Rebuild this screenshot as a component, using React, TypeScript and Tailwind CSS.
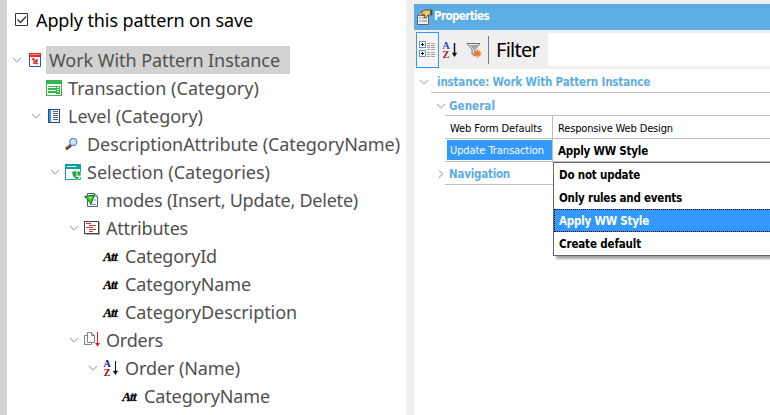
import { useLayoutEffect, useRef, useState, type ReactNode } from "react";

const UI = "font-['Noto_Sans','Open_Sans',sans-serif]";
const TAHOMA = "font-['DejaVu_Sans_Condensed','DejaVu_Sans',sans-serif]";

/* Text whose letter spacing is adjusted so that it occupies a given width. */
function Fit({ w, className = "", children }: { w: number; className?: string; children: string }) {
  const ref = useRef<HTMLSpanElement>(null);
  const [gap, setGap] = useState(0);
  useLayoutEffect(() => {
    if (ref.current) setGap((w - ref.current.getBoundingClientRect().width) / children.length);
  }, []);
  return (
    <span ref={ref} className={`inline-block shrink-0 whitespace-pre ${className}`} style={{ letterSpacing: gap }}>
      {children}
    </span>
  );
}

function Chevron({ right = false }: { right?: boolean }) {
  return (
    <svg width="10" height="10" viewBox="0 0 10 10" fill="none" stroke="#b4bac0" strokeWidth="1.2" className="shrink-0">
      <path d={right ? "M3 1.5 6.5 5 3 8.5" : "M1 3 5 7 9 3"} />
    </svg>
  );
}

function SortIcon({ big = false }: { big?: boolean }) {
  return (
    <svg width="16" height="16" viewBox="0 0 16 16" className="shrink-0 overflow-visible">
      <g fontFamily="Liberation Serif, serif" fontWeight="bold" fontSize={big ? 10.5 : 10} textAnchor="middle">
        <text x="4" y="7.3" fill={big ? "#2851b8" : "#0808b8"}>A</text>
        <text x="4" y="15.6" fill={big ? "#a52430" : "#990808"}>Z</text>
      </g>
      <path d="M12.5 1v13" stroke="#111" strokeWidth={big ? 1.5 : 1} />
      <path d="M9.8 10.8h5.4L12.5 15z" fill="#111" />
    </svg>
  );
}

function AttIcon() {
  return (
    <span className="-ml-px w-4 text-center font-['Liberation_Serif',serif] text-[13px] font-bold italic leading-none tracking-[-0.8px] text-black [-webkit-text-stroke:0.3px_black]">
      Att
    </span>
  );
}

const svg = (children: ReactNode) => (
  <svg width="16" height="16" viewBox="0 0 16 16" className="shrink-0">{children}</svg>
);

const icons: Record<string, ReactNode> = {
  instance: svg(
    <g>
      <path d="M2.5 5v9.5h11V5" fill="#f7f9ff" stroke="#3156a8" />
      <path d="M2 1h12v4H2z" fill="#ed2a24" />
      <path d="M3.5 2.5h9" stroke="#ff9a8b" />
      <path d="M5 7h2v2h3V7M6 11h3V9M9 11.5h2" fill="none" stroke="#d42a22" strokeWidth="1.4" />
    </g>,
  ),
  transaction: svg(
    <g shapeRendering="crispEdges">
      <path d="M0 0h16v16H0z" fill="#36b54a" />
      <path d="M1 4h14v11H1z" fill="#fff" />
      <path d="M2 6h12v8H2z" fill="#36b54a" />
      <path d="M2 7h8v1H2zM2 10h8v1H2zM2 13h8v1H2zM11 7h2v1h-2zM11 9h2v1h-2zM11 11h2v1h-2z" fill="#fff" />
    </g>,
  ),
  level: svg(
    <g shapeRendering="crispEdges">
      <path d="M2 1h12v14H2z" fill="#234a84" />
      <path d="M3 2h2v12H3z" fill="#2c9cf0" />
      <path d="M5 2h8v12H5z" fill="#f2f6ff" />
      <path d="M7 4h5M7 6h5M7 8h5M7 10h5M7 12h5" transform="translate(0 -.5)" stroke="#526078" />
    </g>,
  ),
  search: svg(
    <g>
      <path d="m1 13 5-4" stroke="#56382b" strokeWidth="3" />
      <path d="m1.5 11.5 4-3" stroke="#d6a36c" strokeWidth="1" />
      <circle cx="8.3" cy="6" r="3.5" fill="#bfe6ff" stroke="#668fcc" strokeWidth="1.3" />
      <path d="M6.5 5.8a2 2 0 0 1 2-1.8" fill="none" stroke="#fff" />
    </g>,
  ),
  selection: svg(
    <g>
      <path d="M.5.5h15v15H.5z" fill="#fff" stroke="#08a5a0" />
      <path d="M0 0h16v5H0z" fill="#08a5a0" />
      <path d="M2 2.5h9" stroke="#fff" />
      <circle cx="11.5" cy="11" r="4.8" fill="#e1f5e1" />
      <path d="m7 8 3-1 2 1-1 2 1 1-2 3-2-2zM13 7l2 1 1 3-2 1-2-2zM11 13l3 0-2 3-2-1z" fill="#32a447" />
    </g>,
  ),
  modes: svg(
    <g>
      <path d="M3.5 1.5h7l3 3v10h-10z" fill="#f3f6ff" stroke="#566077" />
      <path d="M10.5 1.5v3h3M6 12.5h6M10 8h2" fill="none" stroke="#8791a6" />
      <path d="M.5 4.5 10.5 3 7 12 5 9z" fill="#39c929" stroke="#126d18" />
      <path d="m3.5 5.2 5-.7-2 2.5z" fill="#8df080" />
    </g>,
  ),
  attributes: svg(
    <g shapeRendering="crispEdges">
      <path d="M2 2h14v13H2z" fill="#aaa" />
      <path d="M.5 1.5h14v12H.5z" fill="#fff" stroke="#444" />
      <path d="M2 3.5h5M5 5.5h7M2 7.5h7M5 9.5h7M5 11.5h4" stroke="#c93c32" />
    </g>,
  ),
  orders: svg(
    <g fill="none" stroke="#808080">
      <path d="M3.5 3.5h-3v9h7v-2" />
      <path d="M3.5.5h4l3 3v7h-7zM7.5.5v3h3" fill="#fff" />
      <path d="M13.5 0v12" stroke="#f11" />
      <path d="M11 11h5l-2.5 3.5z" fill="#f11" stroke="none" />
    </g>,
  ),
  order: <SortIcon />,
  att: <AttIcon />,
};

type Node = { level: number; icon: string; text: string; w: number; open?: boolean; selected?: boolean };

const nodes: Node[] = [
  { level: 0, icon: "instance", text: "Work With Pattern Instance", w: 231, open: true, selected: true },
  { level: 1, icon: "transaction", text: "Transaction (Category)", w: 191 },
  { level: 1, icon: "level", text: "Level (Category)", w: 135, open: true },
  { level: 2, icon: "search", text: "DescriptionAttribute (CategoryName)", w: 313 },
  { level: 2, icon: "selection", text: "Selection (Categories)", w: 183, open: true },
  { level: 3, icon: "modes", text: "modes (Insert, Update, Delete)", w: 252 },
  { level: 3, icon: "attributes", text: "Attributes", w: 82, open: true },
  { level: 4, icon: "att", text: "CategoryId", w: 92 },
  { level: 4, icon: "att", text: "CategoryName", w: 126 },
  { level: 4, icon: "att", text: "CategoryDescription", w: 172 },
  { level: 3, icon: "orders", text: "Orders", w: 57, open: true },
  { level: 4, icon: "order", text: "Order (Name)", w: 115, open: true },
  { level: 5, icon: "att", text: "CategoryName", w: 126 },
];

function TreeRow({ node }: { node: Node }) {
  return (
    <div className="flex h-7 items-center">
      {Array.from({ length: node.level }, (_, i) => (
        <span key={i} className="w-[19px] shrink-0" />
      ))}
      <span className="w-[15px] shrink-0">{node.open && <Chevron />}</span>
      <span className="flex w-[19px] shrink-0 items-center">{icons[node.icon]}</span>
      <span className={`flex h-7 items-center pl-[3px] ${node.selected ? "w-[244px] bg-[#d2d2d2]" : ""}`}>
        <Fit w={node.w} className="text-[18px] leading-7 text-[#505050]">{node.text}</Fit>
      </span>
    </div>
  );
}

function Tree() {
  return (
    <div className="w-[406px] shrink-0 border-l-[7px] border-[#d6d4d8] bg-white">
      <label className="flex h-[46px] items-start pl-2 pt-[6px]">
        <svg width="13" height="13" viewBox="0 0 13 13" fill="none" stroke="#333" className="mt-[7px]">
          <path d="M.5.5h12v12H.5z" />
          <path d="m2.5 6.5 3 3L11 3.5" strokeWidth="1.3" />
        </svg>
        <Fit w={217} className="ml-2 text-[18px] leading-7 text-black">Apply this pattern on save</Fit>
      </label>
      <div className="pl-[5px]">
        {nodes.map((n, i) => (
          <TreeRow key={i} node={n} />
        ))}
      </div>
    </div>
  );
}

function PropertiesIcon() {
  return (
    <svg width="17" height="16" viewBox="0 0 17 16" className="shrink-0">
      <path d="M1.5 6.5h11v9h-11z" fill="#f4f4f4" stroke="#5f6368" />
      <path d="m2 6 4-4 5 4z" fill="#eee" stroke="#777" />
      <path d="M3 9h2M3 12h2M6 9h5M6 12h5" stroke="#6c7684" />
      <path d="M5 3 9 1h7v5h-4l-2 3-2-1 1-2-3-1z" fill="#f3cb6c" stroke="#69502a" />
      <path d="M14 1h2v5h-2z" fill="#43536c" />
    </svg>
  );
}

function CategoriesIcon() {
  return (
    <svg width="17" height="17" viewBox="0 0 17 17" shapeRendering="crispEdges" className="shrink-0">
      <path d="M.5.5h6v6h-6zM.5 9.5h6v6h-6z" fill="#f5faff" stroke="#6c92c0" />
      <path d="M2 3.5h3M3.5 2v3M2 12.5h3M3.5 11v3" stroke="#111" />
      <path d="M8 2.5h3M8 4.5h3M8 6.5h3M8 11.5h3M8 13.5h3M8 15.5h3M12 2.5h4M12 4.5h4M12 6.5h4M8 8.5h3M12 8.5h4M12 11.5h4M12 13.5h4M12 15.5h4" stroke="#a0a0a0" />
    </svg>
  );
}

function FilterIcon() {
  return (
    <svg width="16" height="16" viewBox="0 0 16 16" className="shrink-0">
      <path d="M1 1.5h13L9 7.5V14l-3-2V7.5z" fill="#e6e6e6" stroke="#727272" />
      <path d="M4 3h8L7.5 7.5z" fill="#a0a0a0" />
      <path d="M11.5 7.5v8M7.5 11.5h8M8.7 8.7l5.6 5.6M14.3 8.7l-5.6 5.6" stroke="#f0712a" strokeWidth="1.3" />
    </svg>
  );
}

const options = [
  { text: "Do not update", w: 81 },
  { text: "Only rules and events", w: 123 },
  { text: "Apply WW Style", w: 90 },
  { text: "Create default", w: 82 },
];

function Options() {
  return (
    <div className="absolute left-0 top-[23px] z-10 h-[94px] w-[230px] border border-[#666] bg-white shadow-[3px_3px_2px_rgba(0,0,0,0.35)]">
      {options.map((o) => (
        <div
          key={o.text}
          className={`flex h-[23px] items-center border pl-1 ${
            o.text === "Apply WW Style" ? "border-dotted border-black bg-[#3399ff] text-white" : "border-transparent text-black"
          }`}
        >
          <Fit w={o.w} className="text-[11.5px] font-bold">{o.text}</Fit>
        </div>
      ))}
    </div>
  );
}

function Properties() {
  return (
    <div className="flex min-w-0 grow flex-col border-l-8 border-[#efeff0] bg-white">
      <div className="flex h-[30px] items-center border-t-4 border-[#efefef] bg-[#5dade4] pl-[2px]">
        <PropertiesIcon />
        <Fit w={55} className={`ml-px text-[11.5px] font-bold text-white ${TAHOMA}`}>Properties</Fit>
      </div>
      <div className="flex h-[39px] items-center bg-[#efefef] pl-[2px]">
        <div className="flex h-9 w-[23px] shrink-0 items-center justify-center border border-[#3399ff] bg-[#f4f4f4]">
          <CategoriesIcon />
        </div>
        <div className="ml-[3px] flex w-[46px] shrink-0 items-center gap-2 text-black">
          <SortIcon big />
          <FilterIcon />
        </div>
        <div className="h-7 w-px bg-[#77778f]" />
        <div className="w-[59px] shrink-0 pl-[7px]">
          <Fit w={43} className="text-[20px] leading-8 text-black">Filter</Fit>
        </div>
        <div className="h-[33px] grow bg-white" />
      </div>
      <div className={`grow text-[11px] leading-[14px] ${TAHOMA}`}>
        <div className="flex h-[23px] items-center pl-[5px] pt-[3px]">
          <Chevron />
          <Fit w={213} className="ml-2 text-[11.5px] font-bold text-[#5dade4]">instance: Work With Pattern Instance</Fit>
        </div>
        <div className="ml-[17px] border-t border-[#bdbdbd]">
          <div className="flex h-[22px] items-center pl-[5px] pt-[3px]">
            <Chevron />
            <Fit w={46} className="ml-[3px] text-[11.5px] font-bold text-[#5dade4]">General</Fit>
          </div>
          <div className="ml-[14px]">
            <div className="flex h-[23px] border-t border-[#bdbdbd] text-black">
              <div className="flex w-[108px] items-center border-r border-[#bdbdbd] pl-[5px] pt-[3px]">
                <Fit w={92}>Web Form Defaults</Fit>
              </div>
              <div className="flex items-center pl-[5px] pt-[3px]">
                <Fit w={115}>Responsive Web Design</Fit>
              </div>
            </div>
            <div className="flex h-6 border-y border-[#bdbdbd]">
              <div className="w-[108px] border-r border-[#bdbdbd] py-px pl-[2px]">
                <div className="flex h-5 items-center bg-[#3399ff] pl-[3px] pt-[2px] text-white">
                  <Fit w={94}>Update Transaction</Fit>
                </div>
              </div>
              <div className="relative flex grow items-center pl-[5px] pt-[2px]">
                <Fit w={90} className="text-[11.5px] font-bold text-black">Apply WW Style</Fit>
                <Options />
              </div>
            </div>
          </div>
          <div className="flex h-[22px] items-center pl-[5px] pt-[2px]">
            <Chevron right />
            <Fit w={61} className="ml-[3px] text-[11.5px] font-bold text-[#5dade4]">Navigation</Fit>
          </div>
          <div className="ml-[14px] h-px bg-[#bdbdbd]" />
        </div>
      </div>
    </div>
  );
}

export default function App() {
  return (
    <div className={`flex h-[415px] w-[770px] overflow-hidden bg-white ${UI}`}>
      <Tree />
      <Properties />
    </div>
  );
}
